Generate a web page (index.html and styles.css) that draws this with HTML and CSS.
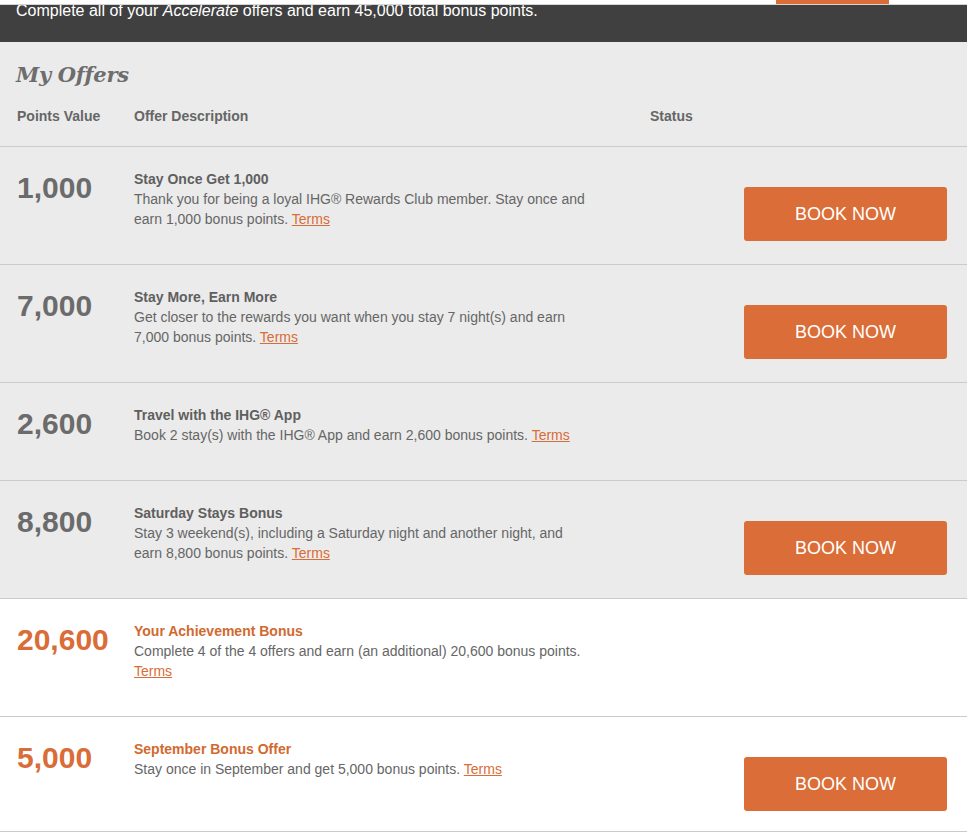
FILE: index.html
```html
<!DOCTYPE html>
<html>
<head>
<meta charset="utf-8">
<link rel="stylesheet" href="styles.css">
</head>
<body>
<div class="topstrip"><div class="topbtn"></div></div>
<div class="banner"><p class="banner-text">Complete all of your <em>Accelerate</em> offers and earn 45,000 total bonus points.</p></div>
<section class="offers">
  <h2 class="offers-title">My Offers</h2>
  <div class="grid head">
    <div>Points Value</div>
    <div>Offer Description</div>
    <div>Status</div>
    <div></div>
  </div>
  <div class="grid row">
    <div class="pts">1,000</div>
    <div class="desc"><div class="ttl">Stay Once Get 1,000</div><div class="txt">Thank you for being a loyal IHG® Rewards Club member. Stay once and earn 1,000 bonus points. <a href="#">Terms</a></div></div>
    <div></div>
    <div><a class="book" href="#">BOOK NOW</a></div>
  </div>
  <div class="grid row">
    <div class="pts">7,000</div>
    <div class="desc"><div class="ttl">Stay More, Earn More</div><div class="txt">Get closer to the rewards you want when you stay 7 night(s) and earn 7,000 bonus points. <a href="#">Terms</a></div></div>
    <div></div>
    <div><a class="book" href="#">BOOK NOW</a></div>
  </div>
  <div class="grid row">
    <div class="pts">2,600</div>
    <div class="desc"><div class="ttl">Travel with the IHG® App</div><div class="txt">Book 2 stay(s) with the IHG® App and earn 2,600 bonus points. <a href="#">Terms</a></div></div>
    <div></div>
    <div></div>
  </div>
  <div class="grid row">
    <div class="pts">8,800</div>
    <div class="desc"><div class="ttl">Saturday Stays Bonus</div><div class="txt">Stay 3 weekend(s), including a Saturday night and another night, and earn 8,800 bonus points. <a href="#">Terms</a></div></div>
    <div></div>
    <div><a class="book" href="#">BOOK NOW</a></div>
  </div>
  <div class="grid row bonus">
    <div class="pts">20,600</div>
    <div class="desc"><div class="ttl">Your Achievement Bonus</div><div class="txt">Complete 4 of the 4 offers and earn (an additional) 20,600 bonus points. <a href="#">Terms</a></div></div>
    <div></div>
    <div></div>
  </div>
  <div class="grid row bonus">
    <div class="pts">5,000</div>
    <div class="desc"><div class="ttl">September Bonus Offer</div><div class="txt">Stay once in September and get 5,000 bonus points. <a href="#">Terms</a></div></div>
    <div></div>
    <div><a class="book" href="#">BOOK NOW</a></div>
  </div>
</section>
</body>
</html>
```
FILE: styles.css
```css
* { box-sizing: border-box; }
html, body { margin: 0; padding: 0; background: #fff; }
body { font-family: "Liberation Sans", Arial, sans-serif; color: #666; }

.topstrip { height: 5px; border-bottom: 1px solid #d4d4d4; background: #fff; }
.topbtn { margin-left: 776px; width: 113px; height: 4px; background: #da6d38; }

.banner { height: 37px; background: #404040; overflow: hidden; padding-left: 16px; }
.banner-text { margin: -4px 0 0; color: #fff; font-size: 16px; line-height: 20px; }
.banner-text em { font-style: italic; }

.offers { background: #ebebeb; padding-top: 19px; }
.offers-title { margin: 0 0 0 16px; font-family: "DejaVu Serif", Georgia, serif; font-style: italic; font-weight: bold; font-size: 21px; line-height: 28px; color: #6d6d6d; letter-spacing: -0.3px; }

.grid { display: grid; grid-template-columns: 117px 516px 1fr 203px; padding: 0 20px 0 17px; }
.head { font-size: 14px; font-weight: bold; color: #666; padding-top: 19px; padding-bottom: 22px; line-height: 16px; border-bottom: 1px solid #cbcbcb; }

.row { border-bottom: 1px solid #cbcbcb; padding-top: 22px; }
.row.bonus { background: #fff; }
.pts { font-size: 30px; font-weight: bold; color: #6b6b6b; line-height: 34px; padding-top: 2px; }
.bonus .pts { color: #d96c37; }
.desc { width: 458px; padding-bottom: 35px; }
.ttl { font-size: 14px; font-weight: bold; color: #5f5f5f; line-height: 20px; }
.bonus .ttl { color: #d2692f; }
.txt { font-size: 14px; line-height: 20px; color: #666; }
.txt a { color: #d96c37; text-decoration: underline; }

.book { display: flex; align-items: center; justify-content: center; margin-top: 18px; margin-bottom: 20px; width: 203px; height: 54px; background: #da6d38; border-radius: 3px; color: #fff; font-size: 18px; text-decoration: none; }
```
